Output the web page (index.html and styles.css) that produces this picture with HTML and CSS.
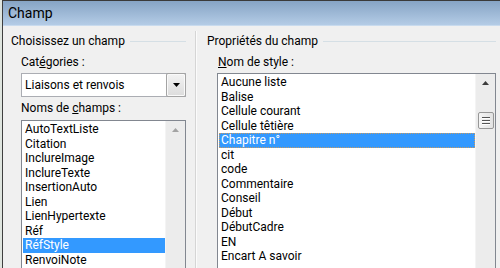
FILE: index.html
```html
<!DOCTYPE html>
<html lang="fr">

<head>
  <meta charset="UTF-8">
  <meta name="viewport" content="width=device-width, initial-scale=1.0">
  <title>Champ</title>
  <link rel="stylesheet" href="styles.css">
</head>

<body>
  <div class="window">
    <div class="titlebar">Champ</div>

    <div class="dialog">
      <!-- Left pane: field picker -->
      <section class="pane pane-left">
        <div class="group-title"><span>Choisissez un champ</span></div>

        <div class="field">
          <label class="field-label">Cat<u>é</u>gories :</label>
          <div class="combo">
            <span class="combo-value">Liaisons et renvois</span>
            <span class="combo-btn">
              <svg width="7" height="4" viewBox="0 0 7 4"><path d="M0 0h7L3.5 4z" fill="#000"/></svg>
            </span>
          </div>
        </div>

        <div class="field">
          <label class="field-label">Noms de <u>c</u>hamps :</label>
          <div class="listbox listbox-left">
            <ul class="list-items">
              <li>AutoTextListe</li>
              <li>Citation</li>
              <li>InclureImage</li>
              <li>InclureTexte</li>
              <li>InsertionAuto</li>
              <li>Lien</li>
              <li>LienHypertexte</li>
              <li>Réf</li>
              <li class="selected">RéfStyle</li>
              <li>RenvoiNote</li>
            </ul>
            <div class="scrollbar">
              <span class="arrow-up disabled">
                <svg width="7" height="4" viewBox="0 0 7 4"><path d="M0 4h7L3.5 0z"/></svg>
              </span>
            </div>
          </div>
        </div>
      </section>

      <div class="divider"></div>

      <!-- Right pane: field properties -->
      <section class="pane pane-right">
        <div class="group-title"><span>Propriétés du champ</span></div>

        <div class="field">
          <label class="field-label"><u>N</u>om de style :</label>
          <div class="listbox listbox-right">
            <ul class="list-items">
              <li>Aucune liste</li>
              <li>Balise</li>
              <li>Cellule courant</li>
              <li>Cellule têtière</li>
              <li class="selected focused">Chapitre n°</li>
              <li>cit</li>
              <li>code</li>
              <li>Commentaire</li>
              <li>Conseil</li>
              <li>Début</li>
              <li>DébutCadre</li>
              <li>EN</li>
              <li>Encart A savoir</li>
            </ul>
            <div class="scrollbar">
              <span class="arrow-up">
                <svg width="7" height="4" viewBox="0 0 7 4"><path d="M0 4h7L3.5 0z"/></svg>
              </span>
              <span class="thumb">
                <span class="grip"></span>
                <span class="grip"></span>
                <span class="grip"></span>
              </span>
            </div>
          </div>
        </div>
      </section>
    </div>
  </div>
</body>

</html>
```

FILE: styles.css
```css
body {
  margin: 0;
  padding: 0;
  height: 268px;
  overflow: hidden;
  background: #dfe5df;
  font-family: 'Roboto', sans-serif;
  font-size: 12px;
  color: #000;
}

.window {
  margin-left: 2px;
  border-left: 1px solid #3f3f3f;
  border-top: 1px solid #3a3a3a;
  background: #f0f0f0;
  height: 300px;
}

.titlebar {
  height: 24px;
  line-height: 24px;
  padding-left: 5px;
  font-size: 14px;
  background: linear-gradient(to bottom, #86a4c5, #b4cce6);
  border-bottom: 1px solid #c9dbee;
}

.dialog {
  display: flex;
}

.pane {
  display: flex;
  flex-direction: column;
}

.pane-left {
  width: 175px;
  padding: 8px 9px 0 8px;
}

.pane-right {
  flex: 1;
  padding: 8px 4px 0 10px;
}

.divider {
  width: 1px;
  background: #d5d5d5;
  border-right: 1px solid #fbfbfb;
  margin-top: 5px;
}

.group-title {
  display: flex;
  align-items: center;
  line-height: 15px;
}

.group-title::after {
  content: "";
  flex: 1;
  height: 1px;
  margin-left: 5px;
  background: #d5dfe5;
}

.field {
  display: flex;
  flex-direction: column;
  padding-left: 10px;
}

.field-label {
  line-height: 15px;
  margin-top: 6px;
  margin-bottom: 3px;
}

.pane-right .field-label {
  padding-left: 1px;
}

.pane-left .field + .field .field-label {
  margin-top: 4px;
  margin-bottom: 4px;
}

.combo {
  display: flex;
  align-items: center;
  height: 22px;
  background: #fff;
  border: 1px solid #abadb3;
}

.combo-value {
  flex: 1;
  padding-left: 3px;
}

.combo-btn {
  display: flex;
  align-items: center;
  justify-content: center;
  width: 18px;
  height: 22px;
  margin-right: -1px;
  border: 1px solid #a4a4a4;
  border-radius: 2px;
  background: linear-gradient(to bottom, #f3f3f3, #dcdcdc);
  box-shadow: inset 0 0 0 1px #fafafa;
}

.listbox {
  display: flex;
  background: #fff;
  border: 1px solid #828790;
  height: 200px;
}

.list-items {
  flex: 1;
  list-style: none;
  margin: 0;
  padding: 1px 0 0 1px;
}

.list-items li {
  height: 14.5px;
  line-height: 14.5px;
  padding-left: 2px;
  white-space: nowrap;
}

.list-items li.selected {
  background: #3399ff;
  color: #fff;
}

.list-items li.focused {
  outline: 1px dotted #c89a60;
  outline-offset: -1px;
}

.scrollbar {
  width: 19px;
  display: flex;
  flex-direction: column;
  align-items: center;
  background: #ececec;
  border-left: 1px solid #f4f4f4;
}

.arrow-up {
  display: flex;
  justify-content: center;
  align-items: center;
  height: 17px;
  width: 100%;
  fill: #3c3c3c;
}

.arrow-up.disabled {
  fill: #a3a3a3;
}

.thumb {
  display: flex;
  flex-direction: column;
  justify-content: center;
  align-items: center;
  gap: 2px;
  width: 14px;
  height: 15px;
  margin-top: 21px;
  border: 1px solid #979797;
  border-radius: 2px;
  background: linear-gradient(to right, #f5f5f5, #e2e2e2);
}

.grip {
  width: 8px;
  height: 1px;
  background: #555;
  box-shadow: 0 1px 0 #fff;
}
```
